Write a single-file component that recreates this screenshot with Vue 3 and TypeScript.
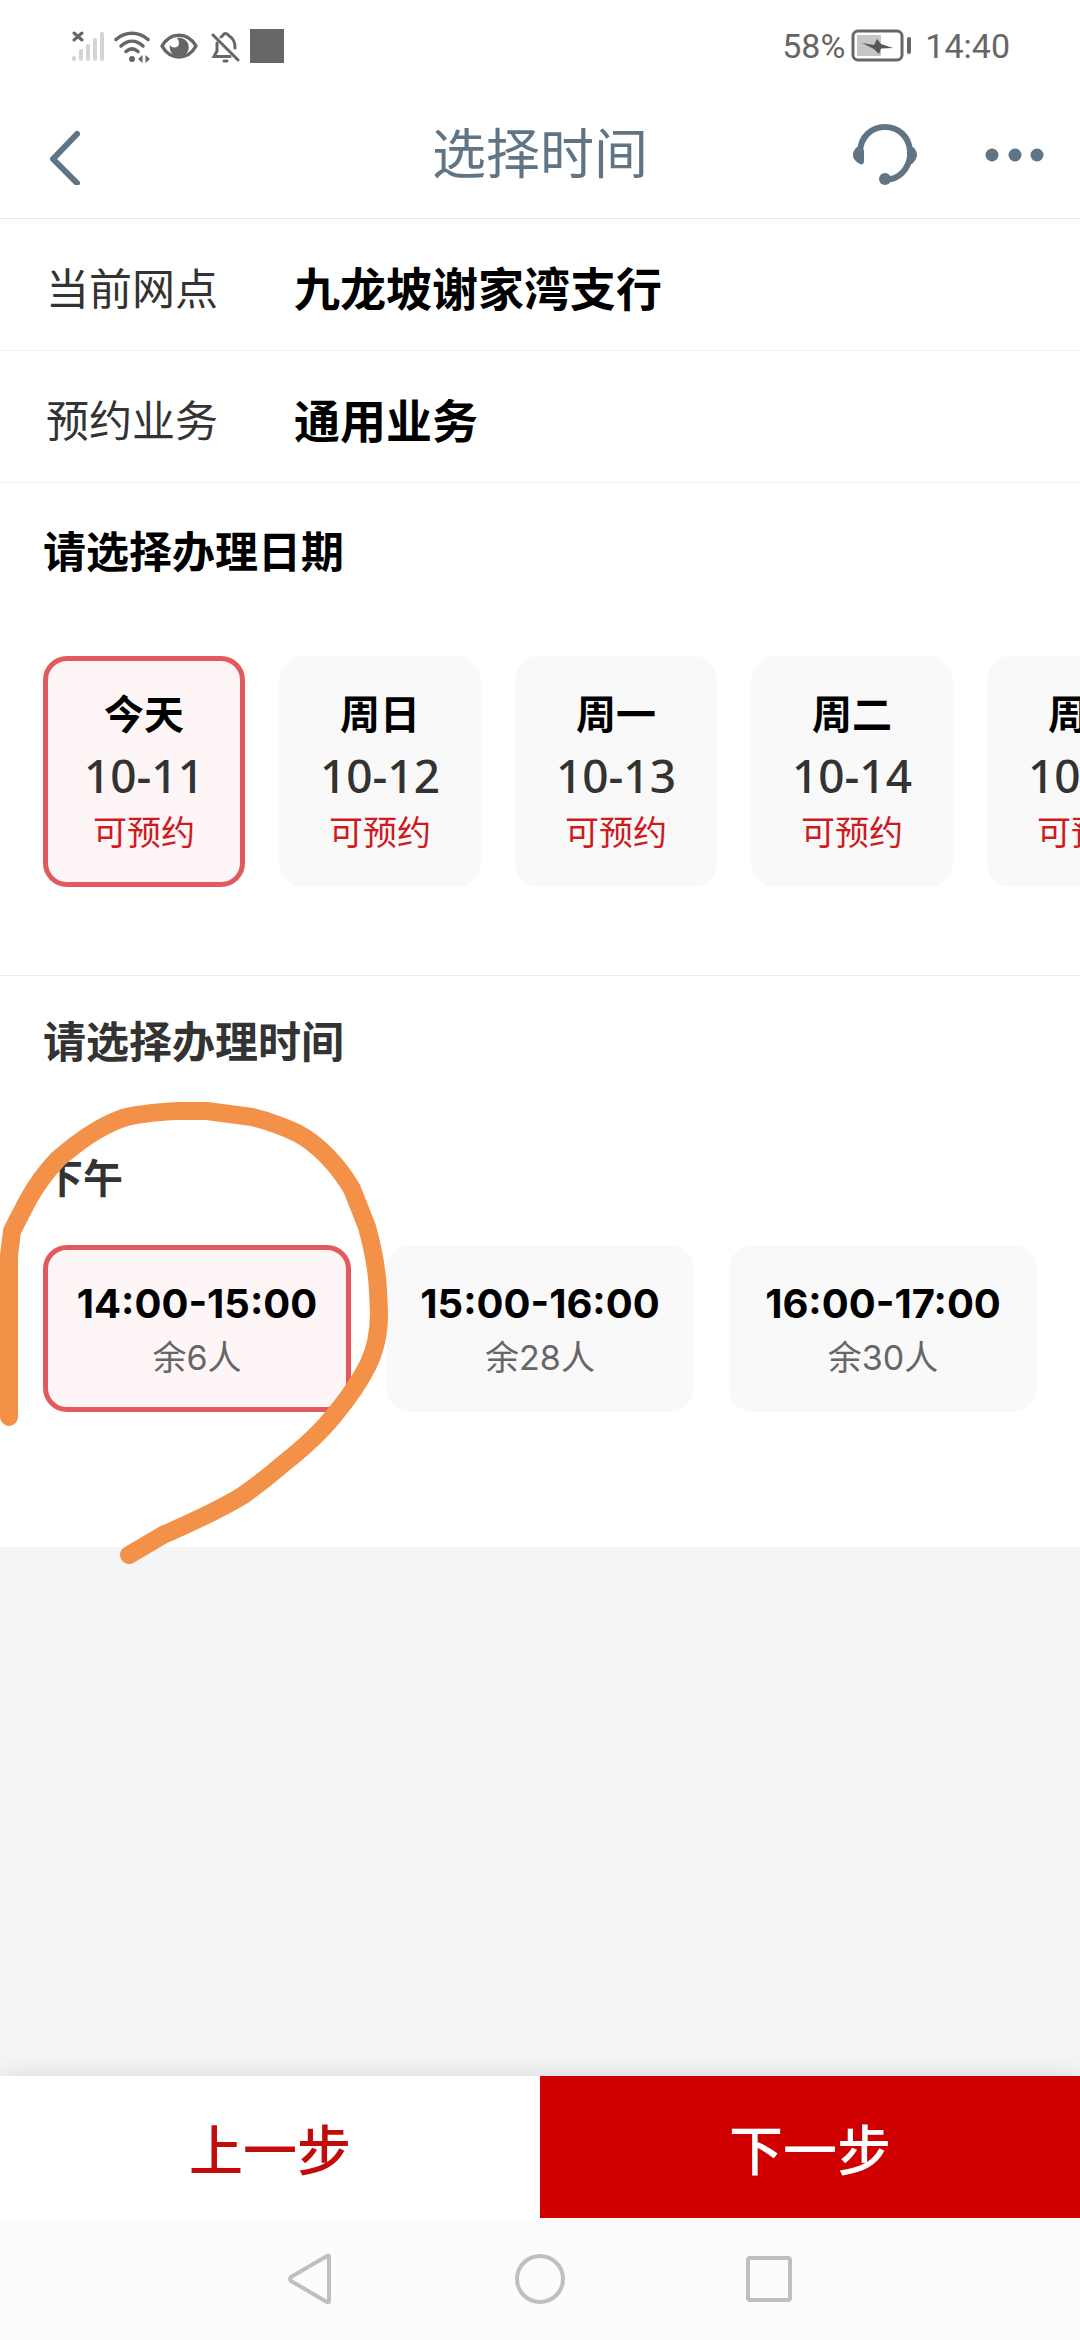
<script setup lang="ts">
import { ref } from 'vue'

interface DateOption {
  day: string
  date: string
  status: string
}

interface TimeSlot {
  range: string
  left: number
}

const branch = '九龙坡谢家湾支行'
const service = '通用业务'

const dates: DateOption[] = [
  { day: '今天', date: '10-11', status: '可预约' },
  { day: '周日', date: '10-12', status: '可预约' },
  { day: '周一', date: '10-13', status: '可预约' },
  { day: '周二', date: '10-14', status: '可预约' },
  { day: '周三', date: '10-15', status: '可预约' },
]

const slots: TimeSlot[] = [
  { range: '14:00-15:00', left: 6 },
  { range: '15:00-16:00', left: 28 },
  { range: '16:00-17:00', left: 30 },
]

const selectedDate = ref(0)
const selectedSlot = ref(0)
</script>

<template>
  <div class="page">
    <div class="status-bar">
      <div class="status-icons">
        <svg width="32" height="34" viewBox="0 0 32 34" fill="none" stroke-linecap="round">
          <path d="M2 29v1M9 22v8M16 17v13M23 11v19M30 5v25" stroke="#d4d4d4" stroke-width="4" />
          <path d="M2 4l8 7M10 4l-8 7" stroke="#666" stroke-width="3" />
        </svg>
        <svg width="36" height="34" viewBox="0 0 36 34" fill="none" stroke="#666" stroke-linecap="round">
          <path d="M2 10.500C11 2 25 2 34 10.500" stroke-width="3.500" />
          <path d="M7 17C14 10.500 22 10.500 29 17" stroke-width="3.500" />
          <path d="M12 22.500C16 19 20 19 24 22.500" stroke-width="3.500" />
          <circle cx="18" cy="30" r="3" fill="#666" stroke="none" />
          <path d="M24 30l4.500-4v8zM36 30l-4.500-4v8z" fill="#666" stroke="none" />
        </svg>
        <svg width="38" height="34" viewBox="0 0 38 34">
          <path d="M2 17C10 2.500 28 2.500 36 17C28 31.500 10 31.500 2 17Z" fill="none" stroke="#666" stroke-width="3.500" stroke-linejoin="round" />
          <path d="M17 9A9.500 9.500 0 1 1 10 16C12 20 19 19 19 14.500C19 12 18 10.500 17 9Z" fill="#666" />
        </svg>
        <svg width="32" height="34" viewBox="0 0 32 34" fill="none" stroke="#666" stroke-width="3" stroke-linecap="round">
          <path d="M5 6L30 31" />
          <path d="M13 8C15 7 15 4.500 17.500 4.500S20 6.500 22 7.500C26 10 27 13 27 19" />
          <path d="M9 14V22L6 27.500H22" />
          <path d="M16 32H19" />
        </svg>
        <svg width="34" height="34" viewBox="0 0 34 34"><rect width="34" height="34" fill="#666" /></svg>
      </div>
      <div class="status-right">
        <span>58%</span>
        <svg width="60" height="34" viewBox="0 0 60 34">
          <rect x="2" y="2" width="49" height="29" rx="5" fill="none" stroke="#666" stroke-width="3" />
          <rect x="6" y="6" width="24" height="21" rx="1" fill="#c6c6c6" />
          <path d="M11 14L23 16L26 10L30 15L42 19L30 19.500L28 25L23 20Z" fill="#555" />
          <rect x="56" y="8" width="4" height="17" rx="2" fill="#666" />
        </svg>
        <span class="clock">14:40</span>
      </div>
    </div>

    <header class="header">
      <button class="icon-button back" type="button" aria-label="返回">
        <svg width="34" height="60" viewBox="0 0 34 60" fill="none" stroke="#5f7484" stroke-width="6" stroke-linecap="round" stroke-linejoin="round">
          <path d="M29 9L5 34L29 58" />
        </svg>
      </button>
      <h1>选择时间</h1>
      <div class="header-actions">
        <button class="icon-button" type="button" aria-label="客服">
          <svg width="64" height="64" viewBox="0 0 64 64">
            <path d="M7 28C8 14 18 4 32 4S56 14 57 28" fill="none" stroke="#5f7484" stroke-width="6" />
            <path d="M57 34C55 46 46 57 33 56.500" fill="none" stroke="#5f7484" stroke-width="6" />
            <path d="M4 24H9.500L11 28V38C11 41 9 42 7 41C2 38 0 36 0 31C0 28 2 26 4 24Z" fill="#5f7484" />
            <path d="M54 24H60C63 27 64 29 64 32S62 38 59 41H54Z" fill="#5f7484" />
            <circle cx="32" cy="56" r="6" fill="#5f7484" />
          </svg>
        </button>
        <button class="icon-button" type="button" aria-label="更多">
          <svg width="60" height="64" viewBox="0 0 60 64" fill="#5f7484">
            <circle cx="8" cy="32" r="6.500" />
            <circle cx="31" cy="32" r="6.500" />
            <circle cx="53" cy="32" r="6.500" />
          </svg>
        </button>
      </div>
    </header>

    <main class="content">
      <dl class="info">
        <div class="info-row">
          <dt>当前网点</dt>
          <dd>{{ branch }}</dd>
        </div>
        <div class="info-row">
          <dt>预约业务</dt>
          <dd>{{ service }}</dd>
        </div>
      </dl>

      <section class="date-section">
        <h2>请选择办理日期</h2>
        <div class="date-list">
          <button
            v-for="(item, index) in dates"
            :key="item.date"
            type="button"
            class="card date-card"
            :class="{ selected: index === selectedDate }"
            :aria-pressed="index === selectedDate"
            @click="selectedDate = index"
          >
            <span class="day">{{ item.day }}</span>
            <span class="date">{{ item.date }}</span>
            <span class="tag">{{ item.status }}</span>
          </button>
        </div>
      </section>

      <section class="time-section">
        <h2>请选择办理时间</h2>
        <h3>下午</h3>
        <div class="time-list">
          <button
            v-for="(slot, index) in slots"
            :key="slot.range"
            type="button"
            class="card time-card"
            :class="{ selected: index === selectedSlot }"
            :aria-pressed="index === selectedSlot"
            @click="selectedSlot = index"
          >
            <span class="range">{{ slot.range }}</span>
            <span class="left">余{{ slot.left }}人</span>
          </button>
        </div>
        <!-- Freehand marker loop around the first slot -->
        <svg class="marker" width="400" height="480" viewBox="0 1097 400 480" fill="none" stroke="#f39149" stroke-width="18" stroke-linecap="round" stroke-linejoin="round">
          <path d="M9 1418V1257L12 1232L28 1201C34 1190 42 1177 58 1160C78 1143 98 1128 123 1119C140 1114 160 1113 177 1112H207L252 1118C268 1122 282 1127 297 1134C318 1145 338 1166 352 1190L367 1228C372 1246 377 1272 378 1291L379 1314C379 1334 376 1350 368 1366C360 1382 350 1397 336 1414C322 1432 302 1450 283 1465C268 1478 255 1488 242 1497C217 1512 195 1522 163 1536L129 1556" />
        </svg>
      </section>
    </main>

    <footer class="actions">
      <button type="button" class="prev">上一步</button>
      <button type="button" class="next">下一步</button>
    </footer>

    <nav class="system-nav" aria-label="系统导航">
      <button class="icon-button" type="button" aria-label="后退">
        <svg width="50" height="54" viewBox="0 0 50 54" fill="none" stroke="#bfbfbf" stroke-width="4" stroke-linejoin="round">
          <path d="M43 4.500V49.500Q43 51 41 50L5 29Q3 27 5 25L41 4Q43 3 43 4.500Z" />
        </svg>
      </button>
      <button class="icon-button" type="button" aria-label="主屏幕">
        <svg width="50" height="54" viewBox="0 0 50 54" fill="none" stroke="#bfbfbf" stroke-width="4">
          <circle cx="25" cy="27" r="23" />
        </svg>
      </button>
      <button class="icon-button" type="button" aria-label="最近任务">
        <svg width="50" height="54" viewBox="0 0 50 54" fill="none" stroke="#bfbfbf" stroke-width="4">
          <rect x="4" y="6" width="42" height="42" rx="2" />
        </svg>
      </button>
    </nav>
  </div>
</template>

<style>
body {
  margin: 0;
  background: #f4f5f7;
}
</style>

<style scoped>
.page {
  display: flex;
  flex-direction: column;
  min-height: 100vh;
  overflow-x: hidden;
  background: #f4f5f7;
  color: #333;
  font-family: Inter, "Noto Sans CJK SC", sans-serif;
}

button {
  margin: 0;
  padding: 0;
  border: 0;
  background: none;
  color: inherit;
  font: inherit;
  cursor: pointer;
}

h1,
h2,
h3,
dl,
dd {
  margin: 0;
}

svg {
  display: block;
}

.status-bar {
  display: flex;
  align-items: center;
  justify-content: space-between;
  height: 92px;
  padding: 0 70px 0 72px;
  background: #fff;
}

.status-icons,
.status-right {
  display: flex;
  align-items: center;
}

.status-icons {
  gap: 10px;
}

.status-right {
  gap: 6px;
  color: #666;
  font-family: Roboto, sans-serif;
  font-size: 34px;
  font-weight: 400;
  line-height: 40px;
}

.clock {
  margin-left: 8px;
}

.header {
  display: grid;
  grid-template-columns: 1fr auto 1fr;
  align-items: center;
  height: 126px;
  padding: 0 36px;
  border-bottom: 1px solid #e8e8e8;
  background: #fff;
}

.header h1 {
  color: #5f7484;
  font-size: 54px;
  font-weight: 400;
  line-height: 80px;
}

.back {
  justify-self: start;
  padding-left: 12px;
}

.header-actions {
  display: flex;
  justify-content: flex-end;
  gap: 67px;
}

.content {
  flex: 1;
}

.info-row {
  display: flex;
  align-items: center;
  box-sizing: border-box;
  height: 132px;
  padding: 8px 46px 0;
  border-bottom: 1px solid #f0f0f0;
  background: #fff;
}

.info-row dt {
  width: 248px;
  font-size: 43px;
  line-height: 64px;
}

.info-row dd {
  color: #000;
  font-size: 46px;
  font-weight: 700;
  line-height: 64px;
}

.date-section,
.time-section {
  background: #fff;
}

.date-section {
  padding-top: 37px;
  padding-bottom: 88px;
  border-bottom: 1px solid #ececec;
}

.time-section {
  position: relative;
  padding-top: 34px;
  padding-bottom: 135px;
}

h2 {
  padding: 0 43px;
  font-size: 43px;
  font-weight: 700;
  line-height: 64px;
}

.date-section h2 {
  color: #000;
}

.date-list {
  display: flex;
  gap: 34px;
  margin-top: 72px;
  padding: 0 43px;
  overflow-x: auto;
  scrollbar-width: none;
}

.card {
  display: flex;
  flex-direction: column;
  align-items: center;
  box-sizing: border-box;
  border: 5px solid #f9f9f9;
  border-radius: 24px;
  background: #f9f9f9;
}

.card.selected {
  border-color: #e35a5e;
  background: #fef5f6;
}

.date-card {
  flex: none;
  width: 202px;
  height: 231px;
  padding-top: 24px;
}

.day {
  color: #000;
  font-size: 40px;
  font-weight: 700;
  line-height: 60px;
}

.date {
  font-family: "Noto Sans", sans-serif;
  font-size: 46px;
  font-weight: 500;
  line-height: 60px;
}

.tag {
  color: #cf1a1f;
  font-size: 34px;
  line-height: 56px;
}

h3 {
  margin-top: 75px;
  padding: 0 43px;
  font-size: 40px;
  font-weight: 700;
  line-height: 60px;
}

.time-list {
  display: grid;
  grid-template-columns: repeat(3, 1fr);
  gap: 35px;
  margin-top: 36px;
  padding: 0 43px;
}

.time-card {
  height: 167px;
  padding-top: 27px;
}

.range {
  color: #000;
  font-size: 40px;
  font-weight: 700;
  line-height: 54px;
}

.left {
  color: #666;
  font-size: 34px;
  line-height: 54px;
}

.marker {
  position: absolute;
  top: 120px;
  left: 0;
  pointer-events: none;
}

.actions {
  display: grid;
  grid-template-columns: 1fr 1fr;
  height: 142px;
  box-shadow: 0 0 24px rgba(0, 0, 0, 0.12);
  font-size: 54px;
  font-weight: 500;
}

.prev {
  background: #fff;
  color: #c20c0c;
}

.next {
  background: #d00000;
  color: #fff;
}

.system-nav {
  position: relative;
  display: flex;
  align-items: center;
  justify-content: center;
  gap: 179px;
  height: 122px;
  background: #fcfcfc;
}
</style>
